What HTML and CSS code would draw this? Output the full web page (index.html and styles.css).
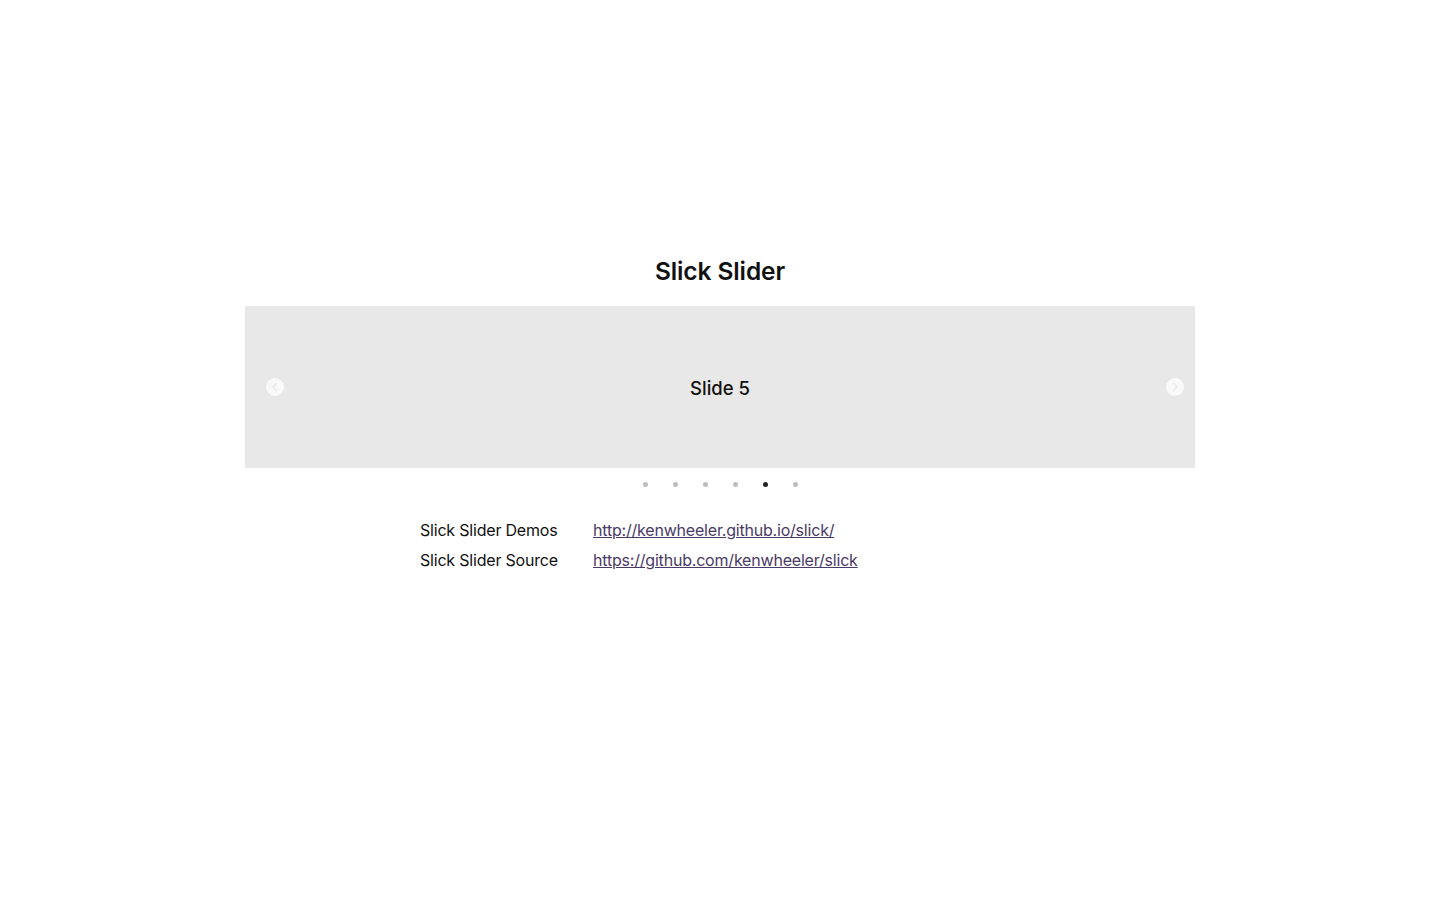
FILE: index.html
```html
<!DOCTYPE html>
<html lang="en">
<head>
<meta charset="utf-8">
<title>Slick Slider</title>
<link rel="stylesheet" href="styles.css">
</head>
<body>
<main class="page">
  <h1 class="title">Slick Slider</h1>
  <div class="slider">
    <button class="arrow arrow-prev" aria-label="Previous">
      <svg width="18" height="18" viewBox="0 0 18 18"><circle cx="9" cy="9" r="9" fill="#fff" fill-opacity="0.75"/><path d="M10.5 5.5 L7 9 L10.5 12.5" fill="none" stroke="#e8e8e8" stroke-width="1.6" stroke-linecap="round" stroke-linejoin="round"/></svg>
    </button>
    <div class="slide">Slide 5</div>
    <button class="arrow arrow-next" aria-label="Next">
      <svg width="18" height="18" viewBox="0 0 18 18"><circle cx="9" cy="9" r="9" fill="#fff" fill-opacity="0.75"/><path d="M7.5 5.5 L11 9 L7.5 12.5" fill="none" stroke="#e8e8e8" stroke-width="1.6" stroke-linecap="round" stroke-linejoin="round"/></svg>
    </button>
  </div>
  <ul class="dots">
    <li class="dot"></li>
    <li class="dot"></li>
    <li class="dot"></li>
    <li class="dot"></li>
    <li class="dot active"></li>
    <li class="dot"></li>
  </ul>
  <div class="links">
    <div class="row"><span class="label">Slick Slider Demos</span><a href="http://kenwheeler.github.io/slick/">http://kenwheeler.github.io/slick/</a></div>
    <div class="row"><span class="label">Slick Slider Source</span><a href="https://github.com/kenwheeler/slick">https://github.com/kenwheeler/slick</a></div>
  </div>
</main>
</body>
</html>
```

FILE: styles.css
```css
html, body {
  margin: 0;
  padding: 0;
  background: #fff;
}
body {
  font-family: Inter, "Noto Sans", sans-serif;
  color: #111;
  padding-right: 4px;
}
.page {
  width: 950px;
  margin: 0 auto;
  padding-top: 255px;
  display: flex;
  flex-direction: column;
  align-items: stretch;
}
.title {
  margin: 0;
  text-align: center;
  font-size: 24.5px;
  font-weight: 600;
  line-height: 30px;
  letter-spacing: -0.1px;
  color: #111;
  padding-top: 1px;
}
.slider {
  position: relative;
  margin-top: 20px;
  height: 162px;
  background: #e8e8e8;
  display: flex;
  align-items: center;
  justify-content: center;
}
.slide {
  font-size: 18.5px;
  font-weight: 500;
  color: #111;
  padding-top: 2px;
}
.arrow {
  position: absolute;
  top: 72px;
  border: 0;
  background: none;
  padding: 0;
  width: 18px;
  height: 18px;
  display: flex;
  cursor: pointer;
}
.arrow-prev {
  left: 21px;
}
.arrow-next {
  right: 11px;
}
.dots {
  list-style: none;
  margin: 14px 0 0;
  padding: 0;
  display: flex;
  justify-content: center;
  gap: 25px;
}
.dot {
  width: 5px;
  height: 5px;
  border-radius: 50%;
  background: #bdbdbd;
}
.dot.active {
  background: #222;
}
.links {
  margin-top: 32px;
  margin-left: 175px;
  display: flex;
  flex-direction: column;
  gap: 8px;
  font-size: 16px;
  line-height: 22px;
}
.row {
  display: flex;
}
.label {
  width: 173px;
  color: #111;
  letter-spacing: -0.2px;
}
.row a {
  color: #4a3a66;
  text-decoration: underline;
  letter-spacing: -0.2px;
}
```
